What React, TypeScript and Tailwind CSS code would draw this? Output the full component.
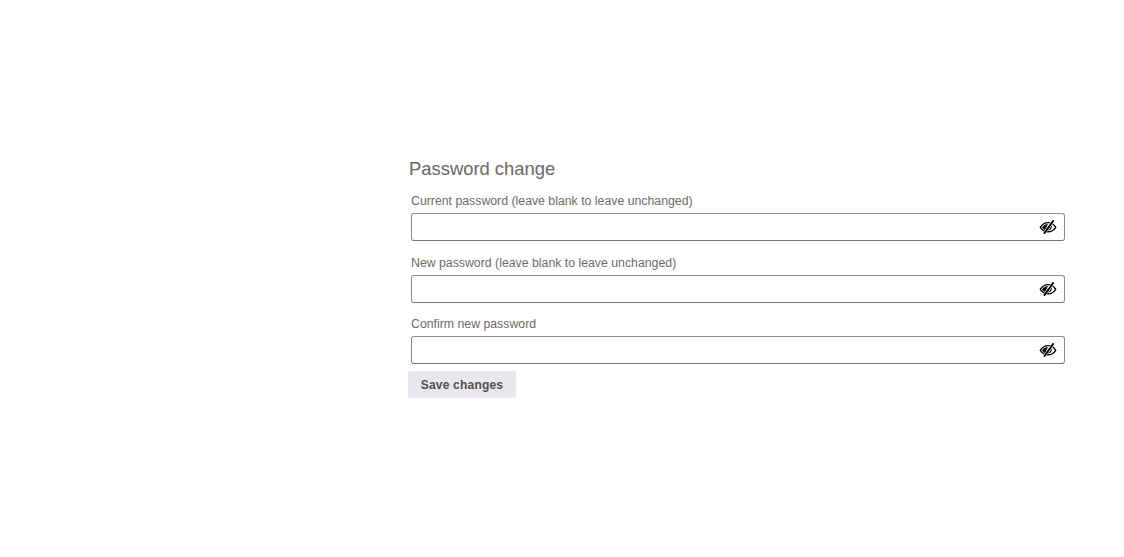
const fields = [
  { label: "Current password (leave blank to leave unchanged)" },
  { label: "New password (leave blank to leave unchanged)" },
  { label: "Confirm new password" },
];

function EyeHidden() {
  return (
    <svg viewBox="0 0 20 20" className="h-[18px] w-[18px]" fill="none">
      <path d="M1.4 10.3C3.6 7 6.6 5.2 10.2 5.2c3.4 0 6.2 1.8 8.4 5.1-2.2 3.3-5 5-8.4 5-3.6 0-6.6-1.7-8.8-5z" stroke="#000" strokeWidth="1.5" />
      <path d="M3.4 10.3c1.6-2 3.6-3.3 6.4-3.5L7 13.8c-1.4-.7-2.6-2-3.6-3.5z" fill="#000" />
      <path d="M13.5 8.6c.5 2.6-1 4.3-3.6 4.6" stroke="#000" strokeWidth="1.4" />
      <path d="M16 2.8L5.6 17.2" stroke="#fff" strokeWidth="3.2" />
      <path d="M15.8 3.2L6 16.8" stroke="#000" strokeWidth="2" strokeLinecap="round" />
    </svg>
  );
}

export default function App() {
  return (
    <div className="min-h-[557px] bg-white pl-[408px] pr-[59px] pt-[157px] font-['Liberation_Sans',Arial,sans-serif]">
      <h3 className="ml-[1px] mb-[12px] text-[18.4px] leading-[24px] text-[#6b6663]">Password change</h3>
      <div className="mb-[7px] flex flex-col gap-[13.5px] pl-[3px]">
        {fields.map((field) => (
          <div key={field.label}>
            <label className="block mb-[4px] text-[12.3px] leading-[16px] text-[#6f6a67]">{field.label}</label>
            <div className="flex h-[28px] items-center justify-end rounded-[3px] border border-[#8c8c8c] border-b-[#777777] bg-white pr-[7px]">
              <EyeHidden />
            </div>
          </div>
        ))}
      </div>
      <button className="h-[27px] w-[108px] rounded-[2px] bg-[#e9e6ed] text-center text-[12px] font-bold tracking-[0.2px] text-[#515151]">
        Save changes
      </button>
    </div>
  );
}
